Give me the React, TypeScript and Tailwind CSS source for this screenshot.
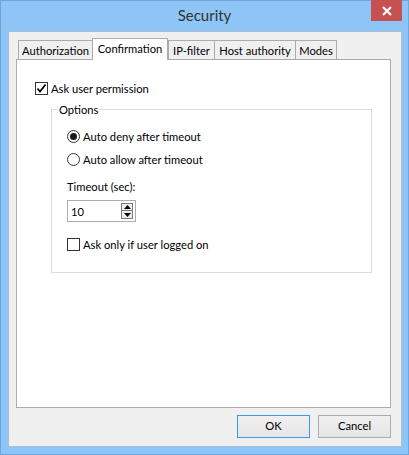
import React from "react";

const font = { fontFamily: 'Lato, "Noto Sans", sans-serif' };

function Tab({ label, w, active }: { label: string; w: string; active?: boolean }) {
  if (active) {
    return (
      <div
        className={`${w} h-[22px] -mb-px relative z-10 bg-white border border-b-0 border-[#acacac] flex items-start justify-center pt-[2px] text-[11.2px] leading-[15px] text-black whitespace-nowrap`}
      >
        {label}
      </div>
    );
  }
  return (
    <div
      className={`${w} h-[19px] bg-[#f0f0f0] border border-b-0 border-[#acacac] flex items-start justify-center pt-[2px] text-[11.2px] leading-[15px] text-black whitespace-nowrap`}
    >
      {label}
    </div>
  );
}

function Check({ checked }: { checked?: boolean }) {
  return (
    <div className="w-[13px] h-[13px] border border-[#333] bg-white flex items-center justify-center shrink-0">
      {checked && (
        <svg width="11" height="11" viewBox="0 0 11 11">
          <path d="M1.5 5.5 L4 8.5 L9.5 1.5" fill="none" stroke="#000" strokeWidth="1.8" />
        </svg>
      )}
    </div>
  );
}

function Radio({ checked }: { checked?: boolean }) {
  return (
    <div className="w-[13px] h-[13px] rounded-full border border-[#333] bg-white flex items-center justify-center shrink-0">
      {checked && <div className="w-[7px] h-[7px] rounded-full bg-[#1a1a1a]" />}
    </div>
  );
}

export default function App() {
  return (
    <div
      className="w-[409px] h-[455px] bg-[#8ec4f6] border border-[#6ba6dc] flex flex-col text-black"
      style={font}
    >
      <div className="h-[30px] relative flex items-center justify-center">
        <span className="text-[15px] text-[#333] leading-none -mt-px">Security</span>
        <div className="absolute right-[6px] -top-px w-[31px] h-[21px] bg-[#c75050] flex items-center justify-center">
          <svg width="10" height="10" viewBox="0 0 10 10">
            <path d="M1 1 L9 9 M9 1 L1 9" stroke="#fff" strokeWidth="2.2" />
          </svg>
        </div>
      </div>
      <div className="ml-[7px] mr-[6px] mb-[7px] flex-1 bg-[#f0f0f0] border border-[#a9bdd0] flex flex-col pt-[6px] pl-[7px] pr-[10px]">
        <div className="flex items-end pl-[2px] h-[21px]">
          <Tab label="Authorization" w="w-[75px]" />
          <Tab label="Confirmation" w="w-[76px] -ml-px" active />
          <Tab label="IP-filter" w="w-[47px]" />
          <Tab label="Host authority" w="w-[82px] -ml-px" />
          <Tab label="Modes" w="w-[42px] -ml-px" />
        </div>
        <div className="h-[349px] bg-white border border-[#acacac] flex flex-col text-[11.2px] leading-[15px]">
          <div className="flex items-center gap-[3px] ml-[18px] mt-[21px]">
            <Check checked />
            <span>Ask user permission</span>
          </div>
          <div className="ml-[34px] mt-[13px] w-[321px] h-[164px] border border-[#dcdcdc] relative flex flex-col pl-[15px]">
            <span className="absolute left-[6px] -top-[8px] bg-white px-[1px] leading-[15px]">Options</span>
            <div className="flex items-center gap-[3px] mt-[19px]">
              <Radio checked />
              <span>Auto deny after timeout</span>
            </div>
            <div className="flex items-center gap-[3px] mt-[8px]">
              <Radio />
              <span>Auto allow after timeout</span>
            </div>
            <span className="mt-[12px]">Timeout (sec):</span>
            <div className="mt-[6px] w-[69px] h-[22px] border border-[#acacac] flex items-center pl-[3px] pr-[2px]">
              <span className="flex-1">10</span>
              <div className="flex flex-col w-[12px]">
                <div className="h-[8px] border border-[#7a7a7a] bg-[#ececec] flex items-center justify-center">
                  <svg width="7" height="4" viewBox="0 0 7 4"><path d="M0 4 L3.5 0 L7 4 Z" fill="#000" /></svg>
                </div>
                <div className="h-[8px] border border-t-0 border-[#7a7a7a] bg-[#ececec] flex items-center justify-center">
                  <svg width="7" height="4" viewBox="0 0 7 4"><path d="M0 0 L3.5 4 L7 0 Z" fill="#000" /></svg>
                </div>
              </div>
            </div>
            <div className="flex items-center gap-[3px] mt-[15px]">
              <Check />
              <span>Ask only if user logged on</span>
            </div>
          </div>
        </div>
        <div className="flex justify-end gap-[8px] mt-[7px]">
          <div className="w-[73px] h-[23px] border border-[#3c9be8] bg-gradient-to-b from-[#f0f0f0] to-[#e5e5e5] flex items-center justify-center text-[11.2px]">
            OK
          </div>
          <div className="w-[73px] h-[23px] border border-[#acacac] bg-gradient-to-b from-[#f0f0f0] to-[#e5e5e5] flex items-center justify-center text-[11.2px]">
            Cancel
          </div>
        </div>
      </div>
    </div>
  );
}
